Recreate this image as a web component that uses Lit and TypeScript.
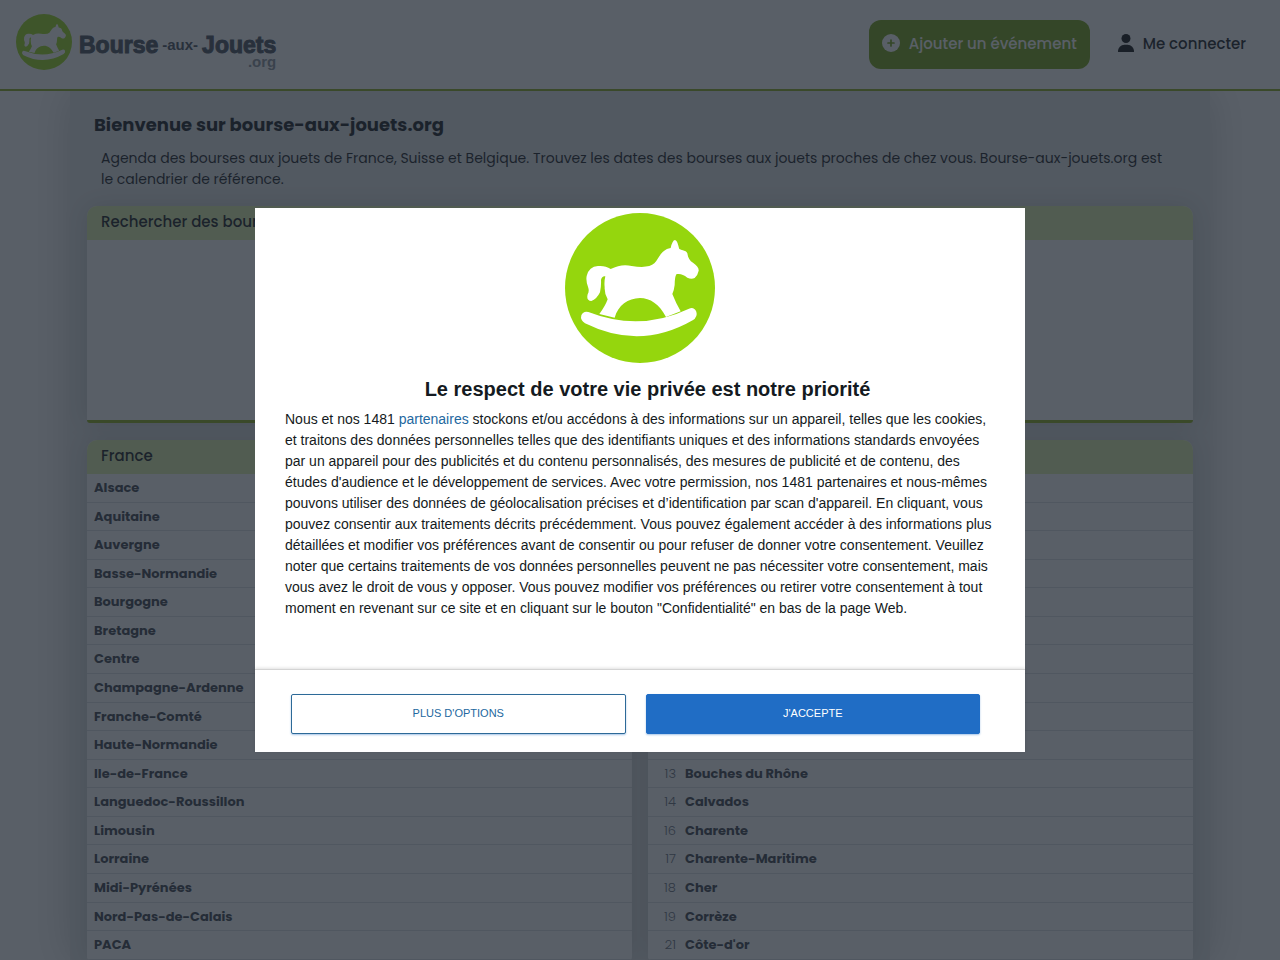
import { LitElement, html, css, svg } from "lit";
import { customElement, property } from "lit/decorators.js";

const regions = [
  "Alsace", "Aquitaine", "Auvergne", "Basse-Normandie", "Bourgogne", "Bretagne",
  "Centre", "Champagne-Ardenne", "Franche-Comté", "Haute-Normandie", "Ile-de-France",
  "Languedoc-Roussillon", "Limousin", "Lorraine", "Midi-Pyrénées",
  "Nord-Pas-de-Calais", "PACA",
];

const departements: [string, string][] = [
  ["01", "Ain"], ["02", "Aisne"], ["03", "Allier"], ["04", "Alpes"], ["06", "Alpes-Maritimes"],
  ["07", "Ardèche"], ["08", "Ardennes"], ["10", "Aube"], ["11", "Aude"], ["12", "Aveyron"],
  ["13", "Bouches du Rhône"], ["14", "Calvados"], ["16", "Charente"],
  ["17", "Charente-Maritime"], ["18", "Cher"], ["19", "Corrèze"], ["21", "Côte-d'or"],
];

const horse = svg`
  <circle cx="300" cy="264" r="225" fill="#95d60d"></circle>
  <path fill="#fff" d="M405 120 C412 122 414 134 418 147 C428 152 438 151 442 160 C444 172 448 182 460 189
    C470 196 477 204 476 212 Q474 224 464 234 Q454 239 442 233 C430 224 420 220 409 223 Q404 232 404 255
    Q402 272 397 282 Q408 310 422 334 L378 351 C358 312 330 294 300 294 C264 295 234 316 224 353 L178 342
    Q196 318 203 298 Q193 280 194 262 Q192 245 196 229 Q186 227 183 240 Q184 258 180 277
    Q170 298 154 303 Q138 302 143 283 Q148 274 145 264 Q137 244 140 228 Q147 199 174 198 Q196 196 212 207
    Q245 190 275 198 Q326 206 343 190 C358 174 364 148 392 144 Q397 121 405 120 Z"></path>
  <path fill="#fff" d="M145 336 Q300 396 447 326 Q462 320 469 335 Q474 350 458 361
    Q300 452 135 370 Q120 360 124 346 Q130 332 145 336 Z"></path>`;

@customElement("horse-logo")
export class HorseLogo extends LitElement {
  static styles = css`
    :host { display: block; }
    .mark { display: block; width: 100%; height: 100%; }
  `;
  render() {
    return html`<svg class="mark" viewBox="75 39 450 450" aria-hidden="true">${horse}</svg>`;
  }
}

@customElement("site-header")
export class SiteHeader extends LitElement {
  static styles = css`
    :host { display: block; }
    .bar {
      display: flex; align-items: center; justify-content: space-between;
      padding: 14px 20px 17px 16px; background: #fff; border-bottom: 2px solid #84a80c;
    }
    .brand { display: flex; align-items: center; gap: 7px; color: #3c4452; text-decoration: none;
      font-family: "Liberation Sans", Arial, sans-serif; font-weight: 700; }
    .icon { width: 56px; height: 56px; margin-bottom: 2px; }
    .words { display: grid; padding-top: 15px; }
    .name { display: flex; align-items: center; gap: 4px; font-size: 23px; line-height: 22px; -webkit-text-stroke: 1px #3c4452; }
    .small { font-size: 15px; -webkit-text-stroke: 0; }
    .org { justify-self: end; font-size: 15px; line-height: 12px; color: #848a94; }
    .nav { display: flex; align-items: center; gap: 14px; padding-top: 2px; }
    .add, .login {
      display: flex; align-items: center; gap: 9px; height: 49px; padding: 0 14px;
      font: 500 15px/20px var(--site-font); color: #0b0d12; text-decoration: none;
      box-sizing: border-box; white-space: nowrap;
    }
    .add { padding: 0 13px; background: #6c9c04; color: #fff; border-radius: 12px; }
    .glyph { width: 18px; height: 18px; flex: none; margin-bottom: 2px; }
    .person { width: 16px; }
  `;
  render() {
    return html`<header class="bar">
      <a class="brand" href="#">
        <horse-logo class="icon"></horse-logo>
        <span class="words">
          <span class="name"><span>Bourse</span><span class="small">-aux-</span><span>Jouets</span></span>
          <span class="org">.org</span>
        </span>
      </a>
      <nav class="nav">
        <a class="add" href="#">
          <svg class="glyph" viewBox="0 0 18 18" aria-hidden="true">
            <circle cx="9" cy="9" r="9" fill="#fff"></circle>
            <path d="M9 6v6M6 9h6" stroke="#6c9c04" stroke-width="1.700" stroke-linecap="round"></path>
          </svg>Ajouter un événement</a>
        <a class="login" href="#">
          <svg class="glyph person" viewBox="1 0 16 18" aria-hidden="true">
            <circle cx="9" cy="4.500" r="4.500" fill="#000"></circle>
            <path d="M1 17.500a6.500 6.500 0 0 1 6.500-6.800h3a6.500 6.500 0 0 1 6.500 6.800q0 .5-.5.5h-15q-.5 0-.5-.5z" fill="#000"></path>
          </svg>Me connecter</a>
      </nav>
    </header>`;
  }
}

@customElement("consent-dialog")
export class ConsentDialog extends LitElement {
  static styles = css`
    :host {
      position: fixed; inset: 0; display: flex; align-items: center; justify-content: center;
      background: rgba(33, 41, 52, 0.75); font-family: "Liberation Sans", Arial, sans-serif;
    }
    .dialog { width: 770px; max-width: 100%; background: #fff; color: #141a21; }
    .content { padding: 5px 15px 50px 30px; }
    .logo { width: 150px; height: 150px; margin: 0 auto; position: relative; right: 8px; }
    .title { margin: 14px 0 8px; font-size: 20px; line-height: 24px; text-align: center; }
    .text { margin: 0; padding-right: 15px; font-size: 14px; line-height: 21px; }
    .link { color: #2368a0; text-decoration: none; }
    .actions {
      display: flex; gap: 20px; padding: 24px 45px 18px 36px;
      border-top: 1px solid #d4d4d4; box-shadow: 0 -1px 3px rgba(0, 0, 0, 0.12);
    }
    .button {
      flex: 1; height: 40px; padding: 0 8px 2px; font: 11px/16px "Liberation Sans", Arial, sans-serif;
      text-transform: uppercase; border-radius: 2px; border: 1px solid #1f6dc6;
      background: #206dc5; color: #fff; box-shadow: 0 1px 2px rgba(32, 109, 197, 0.4);
    }
    .outline { background: #fff; color: #2368a0; border-color: #2d6a98; }
  `;
  render() {
    return html`<section class="dialog" role="dialog" aria-labelledby="title">
      <div class="content">
        <horse-logo class="logo"></horse-logo>
        <h2 class="title" id="title">Le respect de votre vie privée est notre priorité</h2>
        <p class="text">Nous et nos 1481 <a class="link" href="#">partenaires</a> stockons et/ou accédons à des informations sur un appareil, telles que les cookies, et traitons des données personnelles telles que des identifiants uniques et des informations standards envoyées par un appareil pour des publicités et du contenu personnalisés, des mesures de publicité et de contenu, des études d'audience et le développement de services. Avec votre permission, nos 1481 partenaires et nous-mêmes pouvons utiliser des données de géolocalisation précises et d’identification par scan d'appareil. En cliquant, vous pouvez consentir aux traitements décrits précédemment. Vous pouvez également accéder à des informations plus détaillées et modifier vos préférences avant de consentir ou pour refuser de donner votre consentement. Veuillez noter que certains traitements de vos données personnelles peuvent ne pas nécessiter votre consentement, mais vous avez le droit de vous y opposer. Vous pouvez modifier vos préférences ou retirer votre consentement à tout moment en revenant sur ce site et en cliquant sur le bouton "Confidentialité" en bas de la page Web.</p>
      </div>
      <div class="actions">
        <button class="button outline">Plus d'options</button>
        <button class="button">J'accepte</button>
      </div>
    </section>`;
  }
}

@customElement("app-root")
export class AppRoot extends LitElement {
  @property({ attribute: false }) regions = regions;
  @property({ attribute: false }) departements = departements;

  static styles = css`
    :host {
      --site-font: Poppins, Inter, sans-serif;
      display: flex; flex-direction: column; height: 100vh; overflow: hidden;
      background: #fff; font-family: var(--site-font); color: #0b0d12;
    }
    .page { flex: 1; min-height: 0; overflow: hidden; }
    .container {
      box-sizing: border-box; max-width: 1140px; margin: 0 auto; padding: 20px 17px 0;
      min-height: 100%; background: #e3e6e6; box-shadow: 0 0 40px rgba(0, 0, 0, 0.2);
    }
    .heading { margin: 0 7px; font-size: 18px; line-height: 27px; font-weight: 700; }
    .intro { margin: 10px 20px 16px 14px; font-size: 14px; line-height: 21px; }
    .card {
      background: #fff; border-radius: 10px 10px 3px 3px; overflow: hidden;
      box-shadow: 0 0 25px rgba(0, 0, 0, 0.15);
    }
    .search { margin-bottom: 17px; border-bottom: 3px solid #84a80c; }
    .results { height: 180px; }
    .bar {
      margin: 0; padding: 5px 14px 8px; background: #e0f4a8; font-size: 15px; line-height: 21px; font-weight: 500;
    }
    .columns { display: grid; grid-template-columns: 1fr 1fr; gap: 16px; align-items: start; }
    .list { margin: 0; padding: 0; list-style: none; }
    .row {
      display: flex; padding: 5px 7px; border-bottom: 1px solid #dcdfe2;
      font-size: 13px; line-height: 18px; font-weight: 700;
    }
    .row:nth-child(7n + 2), .row:nth-child(7n + 4), .row:nth-child(7n + 6) { padding-bottom: 4px; }
    .place { color: #303640; text-decoration: none; }
    .code { width: 21px; margin-right: 9px; text-align: right; font-weight: 300; color: #5c6470; }
  `;

  render() {
    return html`
      <site-header></site-header>
      <main class="page">
        <div class="container">
          <h1 class="heading">Bienvenue sur bourse-aux-jouets.org</h1>
          <p class="intro">Agenda des bourses aux jouets de France, Suisse et Belgique. Trouvez les dates des bourses aux jouets proches de chez vous. Bourse-aux-jouets.org est le calendrier de référence.</p>
          <section class="card search">
            <h2 class="bar">Rechercher des bourses aux jouets</h2>
            <div class="results"></div>
          </section>
          <div class="columns">
            <section class="card">
              <h2 class="bar">France</h2>
              <ul class="list">
                ${this.regions.map((name) => html`<li class="row"><a class="place" href="#">${name}</a></li>`)}
              </ul>
            </section>
            <section class="card">
              <h2 class="bar">Départements</h2>
              <ul class="list">
                ${this.departements.map(([code, name]) => html`<li class="row"><span class="code">${code}</span><a class="place" href="#">${name}</a></li>`)}
              </ul>
            </section>
          </div>
        </div>
      </main>
      <consent-dialog></consent-dialog>`;
  }
}
